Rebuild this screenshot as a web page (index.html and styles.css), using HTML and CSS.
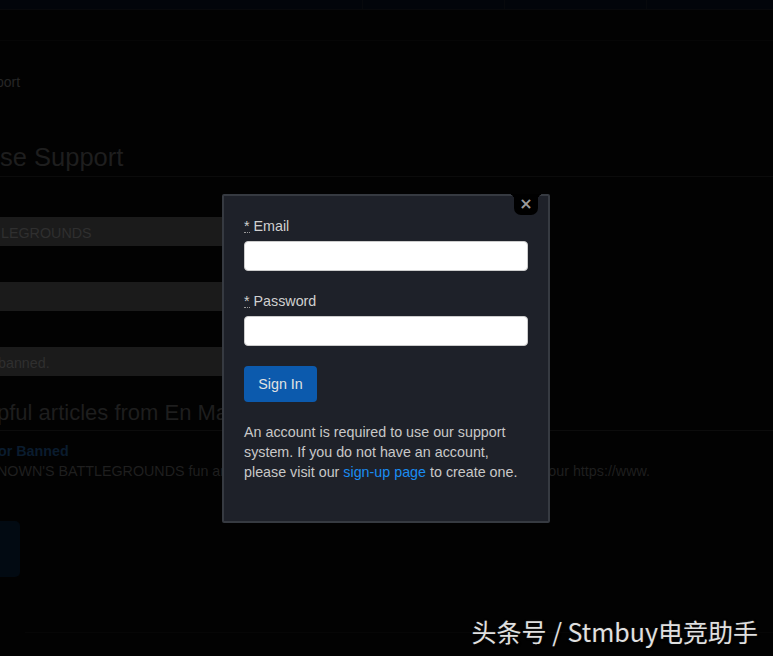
FILE: index.html
```html
<!DOCTYPE html>
<html lang="en">
<head>
<meta charset="utf-8">
<title>Support - Sign In</title>
<link rel="stylesheet" href="styles.css">
</head>
<body>
<div class="page">
  <div class="topbar">
    <div class="tb-cell tb-1"></div>
    <div class="tb-cell tb-2"></div>
    <div class="tb-cell tb-3"></div>
    <div class="tb-cell tb-4"></div>
  </div>
  <div class="subnav"></div>
  <div class="crumb">port</div>
  <h1 class="title">se Support</h1>
  <div class="bar bar-first">LEGROUNDS</div>
  <div class="bar"></div>
  <div class="bar bar-cut">banned.</div>
  <h2 class="subtitle">pful articles from En Masse</h2>
  <div class="art-link">or Banned</div>
  <div class="art-row"><span>NOWN'S BATTLEGROUNDS fun and</span><span>our https://www.</span></div>
  <div class="dark-btn"></div>
  <div class="footer-line"></div>
</div>

<div class="modal">
  <div class="close-tab"><span class="close-x">×</span></div>
  <div class="form-group">
    <label class="lbl"><abbr class="req" title="required">*</abbr> Email</label>
    <input class="inp" type="text">
  </div>
  <div class="form-group">
    <label class="lbl"><abbr class="req" title="required">*</abbr> Password</label>
    <input class="inp" type="password">
  </div>
  <button class="btn">Sign In</button>
  <p class="note">An account is required to use our support system. If you do not have an account, please visit our <a class="link" href="#">sign-up page</a> to create one.</p>
</div>

<div class="watermark">头条号 / Stmbuy电竞助手</div>
</body>
</html>
```
FILE: styles.css
```css
html, body {
  margin: 0;
  padding: 0;
}
body {
  width: 773px;
  height: 656px;
  overflow: hidden;
  background: #020202;
  font-family: "Liberation Sans", Arial, sans-serif;
  font-size: 14px;
  line-height: 20px;
  position: relative;
}
.page {
  width: 773px;
}
.topbar {
  display: flex;
  height: 9px;
  background: #02050a;
  border-bottom: 1px solid #08090b;
}
.tb-cell {
  border-right: 1px solid #07090c;
}
.tb-1 { width: 362px; }
.tb-2 { width: 141px; }
.tb-3 { width: 141px; }
.tb-4 { flex: 1; border-right: 0; }
.subnav {
  height: 30px;
  border-bottom: 1px solid #060606;
}
.crumb {
  margin-top: 31px;
  color: #262626;
  font-size: 14px;
  text-indent: -4px;
}
.title {
  margin: 50px 0 0;
  font-size: 25.5px;
  line-height: 30px;
  font-weight: normal;
  color: #1e1e1e;
  padding-bottom: 4px;
  border-bottom: 1px solid #0b0b0b;
}
.bar {
  box-sizing: border-box;
  width: 300px;
  height: 29px;
  padding-top: 2px;
  line-height: 29px;
  background: #1b1b1b;
  color: #2f2f2f;
  font-size: 14.3px;
  margin-top: 36px;
}
.bar-first {
  margin-top: 40px;
  text-indent: 1px;
}
.bar-cut {
  text-indent: -2px;
}
.subtitle {
  margin: 24px 0 0;
  font-size: 22px;
  line-height: 26px;
  font-weight: normal;
  color: #1e1e1e;
  text-indent: -3px;
  white-space: nowrap;
  padding-bottom: 4px;
  border-bottom: 1px solid #0c0c0c;
}
.art-link {
  margin-top: 10px;
  font-weight: bold;
  font-size: 14.3px;
  color: #0a1c2e;
  text-indent: -2px;
}
.art-row {
  width: 650px;
  display: flex;
  justify-content: space-between;
  color: #1f1f1f;
  font-size: 14.3px;
  white-space: nowrap;
  text-indent: -3px;
}
.dark-btn {
  margin-top: 40px;
  width: 20px;
  height: 56px;
  background: #020a12;
  border-radius: 0 5px 5px 0;
}
.footer-line {
  margin: 55px 0 0 25px;
  border-top: 1px solid #060606;
}

.modal {
  position: absolute;
  left: 222px;
  top: 194px;
  width: 284px;
  padding: 20px 20px 19px;
  background: #1e2129;
  border: 2px solid #363a41;
  border-radius: 2px;
  color: #cfcfcf;
  font-size: 14.3px;
}
.close-tab {
  position: absolute;
  top: -2px;
  right: 10px;
  width: 24px;
  height: 21px;
  background: #000;
  border-radius: 0 0 7px 7px;
  display: flex;
  align-items: center;
  justify-content: center;
}
.close-tab::before,
.close-tab::after {
  content: "";
  position: absolute;
  top: 0;
  width: 6px;
  height: 6px;
}
.close-tab::before {
  left: -6px;
  background: radial-gradient(circle at 0 100%, transparent 6px, #000 6.5px);
}
.close-tab::after {
  right: -6px;
  background: radial-gradient(circle at 100% 100%, transparent 6px, #000 6.5px);
}
.close-x {
  font-family: "DejaVu Sans", sans-serif;
  font-weight: bold;
  font-size: 16px;
  line-height: 16px;
  color: #9a9a9a;
  margin-top: -1px;
}
.form-group {
  margin-bottom: 20px;
}
.lbl {
  display: block;
  color: #d0d0d0;
}
.req {
  text-decoration: none;
  border-bottom: 1px dotted #9a9a9a;
  line-height: 12px;
  display: inline-block;
}
.inp {
  display: block;
  box-sizing: border-box;
  width: 100%;
  height: 30px;
  margin: 5px 0 0;
  border: 1px solid #cccccc;
  border-radius: 4px;
  background: #fff;
  font: inherit;
  padding: 4px 8px;
}
.btn {
  display: block;
  height: 36px;
  width: 73px;
  padding: 0;
  border: 0;
  border-radius: 4px;
  background: #0c5aad;
  color: #e2e2e2;
  font-family: "Liberation Sans", Arial, sans-serif;
  font-size: 14.3px;
  line-height: 36px;
  text-align: center;
}
.note {
  margin: 20px 0 20px;
  color: #c8c8c8;
  line-height: 20px;
}
.link {
  color: #1a8cf2;
  text-decoration: none;
}
.watermark {
  position: absolute;
  right: 15px;
  bottom: 8px;
  font-family: "Noto Sans CJK SC", "Noto Sans", sans-serif;
  font-size: 25px;
  line-height: 34px;
  color: #e0e0e0;
  text-shadow: 1px 1px 2px #000, 0 0 2px #333;
  white-space: nowrap;
}
```
